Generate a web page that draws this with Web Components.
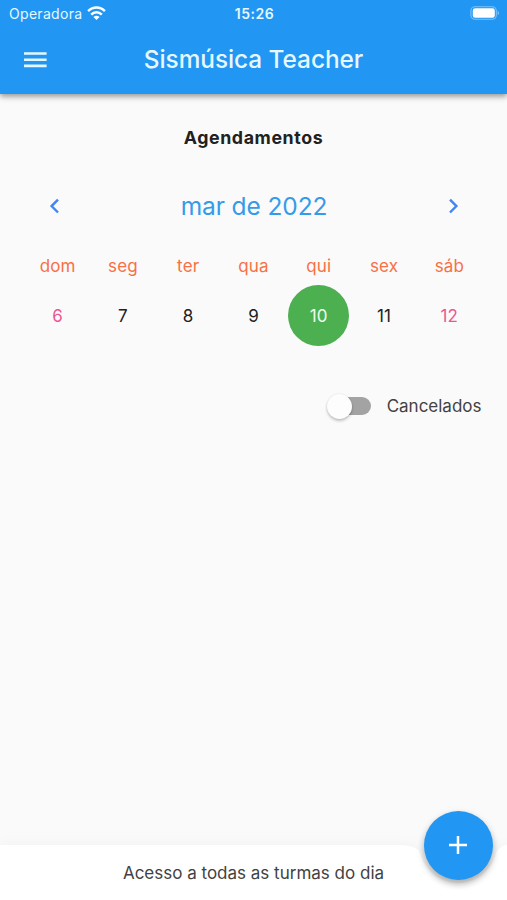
<!DOCTYPE html>
<html lang="pt-BR">
<head>
<meta charset="utf-8">
<title>Sismúsica Teacher</title>
<style>
html,body{margin:0;height:100%;overflow:hidden;background:#fafafa}
</style>
</head>
<body>
<teacher-app></teacher-app>
<script>
const define = (name, markup, setup) => customElements.define(name, class extends HTMLElement {
  constructor() {
    super();
    const t = document.createElement('template');
    t.innerHTML = markup;
    this.attachShadow({ mode: 'open' }).append(t.content.cloneNode(true));
  }
  connectedCallback() { if (setup) setup(this, this.shadowRoot); }
});

define('status-bar', `<style>
:host{display:grid;grid-template-columns:1fr auto 1fr;align-items:center;height:27px;padding:0 7px 0 9px;color:#e6f8ff}
.left{display:flex;align-items:center;gap:5px;font-size:14px;letter-spacing:.3px}
.time{font-size:14px;font-weight:600;letter-spacing:.5px}
svg{display:block}
.left svg{margin-top:-2px}
.battery{justify-self:end;margin-top:-1px}
</style>
<div class="left"><span>Operadora</span>
<svg width="19" height="14" viewBox="0 0 19 14" fill="none" stroke="#fff" stroke-width="2.5"><path d="M1.1 5.2C5.9.4 13.1.4 17.9 5.2M4.2 8.6c3-3 7.6-3 10.6 0"/><path d="M9.5 14 6.4 10.9c1.7-1.7 4.5-1.7 6.2 0z" fill="#fff" stroke="none"/></svg></div>
<span class="time">15:26</span>
<svg class="battery" width="30" height="14" viewBox="0 0 30 14"><rect x=".9" y=".7" width="25.4" height="12.6" rx="4" fill="none" stroke="#7cc3fb" stroke-width="1.1"/><rect x="2.8" y="2.2" width="22" height="9.6" rx="2.3" fill="#fff"/><path d="M27.6 4.8c2 .8 2 3.6 0 4.4z" fill="#7cc3fb"/></svg>`);

define('app-bar', `<style>
:host{display:block;height:94px;background:#2196f3;box-shadow:0 2px 5px rgba(0,0,0,.3),0 4px 6px rgba(0,0,0,.12);z-index:1}
.row{display:grid;grid-template-columns:70px 1fr 70px;align-items:center;height:66px}
svg{display:block;margin-left:24px}
h1{margin:0 0 2px;text-align:center;font-size:24.4px;line-height:30px;font-weight:500;letter-spacing:-.05px;color:#e6f8ff}
</style>
<status-bar></status-bar>
<div class="row"><svg width="23" height="16" viewBox="0 0 23 16" fill="#e6f8ff"><path d="M0 .2h22.6v2.6H0zM0 6.4h22.6v2.6H0zM0 12.6h22.6v2.6H0z"/></svg><h1><slot></slot></h1></div>`);

define('month-header', `<style>
:host{display:flex;align-items:center;justify-content:space-between;height:40px;padding:0 47px 0 48px}
span{font-size:24.5px;letter-spacing:-.1px;color:#359be9}
svg{display:block;fill:none;stroke:#4285f4;stroke-width:2.4}
</style>
<svg width="13" height="16" viewBox="0 0 13 16"><path d="M10 1.7 3.6 8.1l6.4 6.4"/></svg>
<span><slot></slot></span>
<svg width="13" height="16" viewBox="0 0 13 16"><path d="m3 1.7 6.4 6.4L3 14.5"/></svg>`);

define('week-day', `<style>
:host{display:flex;flex-direction:column;align-items:center;font-size:17px;letter-spacing:.15px;color:#212121}
.name{height:24px;line-height:24px;color:#f87045}
.num{display:grid;place-items:center;width:61px;height:61px;margin-top:7px;border-radius:50%}
:host([weekend]) .num{color:#ec5790}
:host([selected]) .num{background:#4caf50;color:#effff0}
</style>
<div class="name"></div><div class="num"><slot></slot></div>`,
(host, root) => { root.querySelector('.name').textContent = host.getAttribute('name'); });

define('week-row', `<style>
:host{display:grid;grid-template-columns:repeat(7,1fr);padding:0 25px}
</style>
<week-day name="dom" weekend>6</week-day><week-day name="seg">7</week-day><week-day name="ter">8</week-day><week-day name="qua">9</week-day><week-day name="qui" selected>10</week-day><week-day name="sex">11</week-day><week-day name="sáb" weekend>12</week-day>`);

define('toggle-switch', `<style>
:host{display:flex;align-items:center;justify-content:flex-end;gap:16px;height:30px;padding-right:25.5px;font-size:17px;letter-spacing:0;color:#424242}
.track{display:flex;align-items:center;width:42px;height:18px;border-radius:9px;background:#a3a3a3}
.thumb{width:25px;height:25px;margin-left:-2px;border-radius:50%;background:#fdfdfd;box-shadow:0 2px 3px rgba(0,0,0,.22),0 0 2px rgba(0,0,0,.1)}
</style>
<div class="track"><div class="thumb"></div></div><span><slot></slot></span>`);

define('bottom-bar', `<style>
:host{display:block;position:relative;height:55px}
.shape{position:absolute;left:0;bottom:0;display:block;filter:drop-shadow(0 -1px 6px rgba(0,0,0,.035))}
.label{position:relative;display:grid;place-items:center;height:55px;font-size:17px;letter-spacing:0;color:#424242}
.fab{position:absolute;left:423.5px;top:-34.5px;display:grid;place-items:center;width:69px;height:69px;border-radius:50%;background:#2196f3;box-shadow:0 4px 6px rgba(0,0,0,.24),0 3px 10px rgba(0,0,0,.1)}
</style>
<svg class="shape" width="507" height="55" viewBox="0 0 507 55"><path fill="#fff" d="M0 0H400C412 0 419 4 420 8A39 39 0 0 0 496 8C498 4 501 1 507 0V55H0Z"/></svg>
<div class="label"><span><slot></slot></span></div>
<div class="fab"><svg width="18" height="18" viewBox="0 0 18 18"><path d="M9 0v18M0 9h18" stroke="#fff" stroke-width="2.5"/></svg></div>`);

define('teacher-app', `<style>
:host{display:flex;flex-direction:column;width:507px;height:900px;overflow:hidden;background:#fafafa;font-family:Inter,"Liberation Sans",sans-serif}
main{flex:1}
h2{margin:32px 0 0;text-align:center;font-size:17.8px;line-height:24px;font-weight:650;letter-spacing:.6px;color:#212121}
month-header{margin-top:36px}
week-row{margin-top:28px}
toggle-switch{margin-top:45px}
</style>
<app-bar>Sismúsica Teacher</app-bar>
<main>
<h2>Agendamentos</h2>
<month-header>mar de 2022</month-header>
<week-row></week-row>
<toggle-switch>Cancelados</toggle-switch>
</main>
<bottom-bar>Acesso a todas as turmas do dia</bottom-bar>`);
</script>
</body>
</html>
